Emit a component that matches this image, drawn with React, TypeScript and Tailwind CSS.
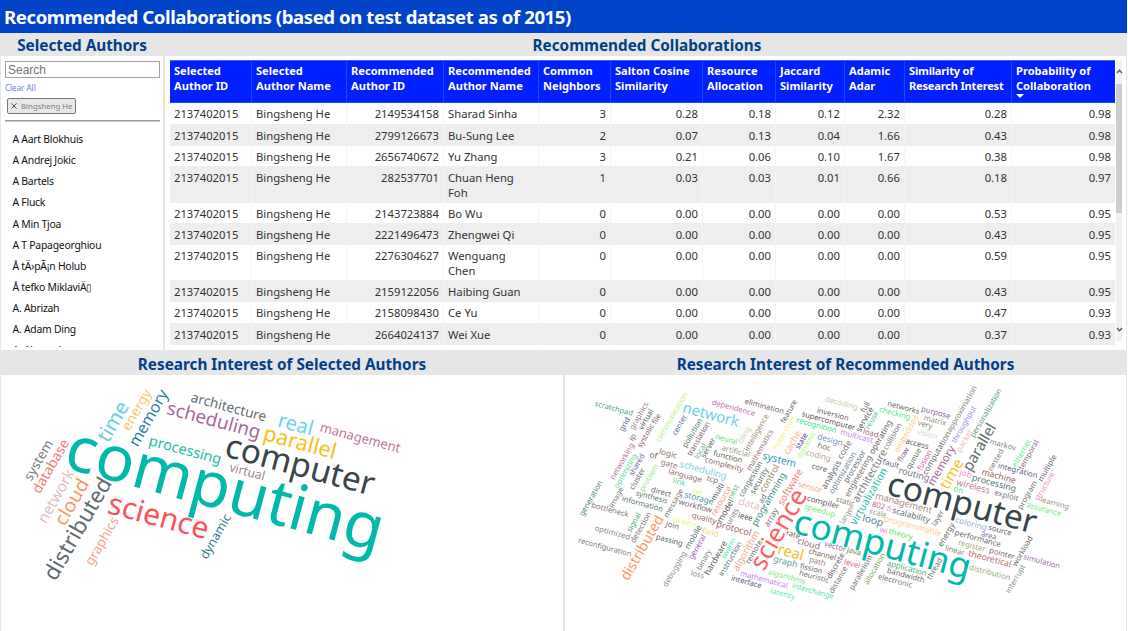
import React from "react";

type Align = "left" | "right";
type Column = { label: [string, string]; align: Align; sorted?: boolean; tight?: boolean };

const columns: Column[] = [
  { label: ["Selected", "Author ID"], align: "left" },
  { label: ["Selected", "Author Name"], align: "left" },
  { label: ["Recommended", "Author ID"], align: "right" },
  { label: ["Recommended", "Author Name"], align: "left" },
  { label: ["Common", "Neighbors"], align: "right" },
  { label: ["Salton Cosine", "Similarity"], align: "right" },
  { label: ["Resource", "Allocation"], align: "right" },
  { label: ["Jaccard", "Similarity"], align: "right" },
  { label: ["Adamic", "Adar"], align: "right" },
  { label: ["Similarity of", "Research Interest"], align: "right", tight: true },
  { label: ["Probability of", "Collaboration"], align: "right", sorted: true },
];

const GRID =
  "grid grid-cols-[82px_95px_97px_95px_72px_92px_73px_69px_60px_107px_103px]";

const rows: { h: string; pad: string; cells: string[] }[] = [
  { h: "h-[21px]", pad: "pt-[3px]", cells: ["2149534158", "Sharad Sinha", "3", "0.28", "0.18", "0.12", "2.32", "0.28", "0.98"] },
  { h: "h-[22px]", pad: "pt-[4px]", cells: ["2799126673", "Bu-Sung Lee", "2", "0.07", "0.13", "0.04", "1.66", "0.43", "0.98"] },
  { h: "h-[20px]", pad: "pt-[3px]", cells: ["2656740672", "Yu Zhang", "3", "0.21", "0.06", "0.10", "1.67", "0.38", "0.98"] },
  { h: "h-[37px]", pad: "pt-[4px]", cells: ["282537701", "Chuan Heng\nFoh", "1", "0.03", "0.03", "0.01", "0.66", "0.18", "0.97"] },
  { h: "h-[20px]", pad: "pt-[3px]", cells: ["2143723884", "Bo Wu", "0", "0.00", "0.00", "0.00", "0.00", "0.53", "0.95"] },
  { h: "h-[22px]", pad: "pt-[4px]", cells: ["2221496473", "Zhengwei Qi", "0", "0.00", "0.00", "0.00", "0.00", "0.43", "0.95"] },
  { h: "h-[35px]", pad: "pt-[3px]", cells: ["2276304627", "Wenguang\nChen", "0", "0.00", "0.00", "0.00", "0.00", "0.59", "0.95"] },
  { h: "h-[22px]", pad: "pt-[4px]", cells: ["2159122056", "Haibing Guan", "0", "0.00", "0.00", "0.00", "0.00", "0.43", "0.95"] },
  { h: "h-[21px]", pad: "pt-[3px]", cells: ["2158098430", "Ce Yu", "0", "0.00", "0.00", "0.00", "0.00", "0.47", "0.93"] },
  { h: "h-[22px]", pad: "pt-[4px]", cells: ["2664024137", "Wei Xue", "0", "0.00", "0.00", "0.00", "0.00", "0.37", "0.93"] },
];

const authors = [
  "A Aart Blokhuis",
  "A Andrej Jokic",
  "A Bartels",
  "A Fluck",
  "A Min Tjoa",
  "A T Papageorghiou",
  "Å tÄ›pÃ¡n Holub",
  "Å tefko MiklaviÄ▯",
  "A. Abrizah",
  "A. Adam Ding",
  "A. Alexandre",
];

/* Word: text, centre x, centre y, size, colour, direction (D = 15° down, U = 60° up) */
type Word = [string, number, number, number, string, "D" | "U"];

const selectedWords: Word[] = [
  ["computing", 224, 493.5, 66.4, "#01b8aa", "D"],
  ["computer", 299.5, 467.5, 35, "#374649", "D"],
  ["science", 158, 518.5, 31.5, "#fd5156", "D"],
  ["parallel", 299.5, 444, 22.8, "#f5c020", "D"],
  ["real", 295.3, 425.8, 21.5, "#6fd2ea", "D"],
  ["scheduling", 213.5, 421.5, 19.7, "#a66999", "D"],
  ["architecture", 228.5, 408, 14.5, "#666f72", "D"],
  ["management", 360, 438.7, 13.8, "#b9799e", "D"],
  ["processing", 185, 451, 15.3, "#28b8aa", "D"],
  ["virtual", 247, 472.6, 13, "#a1887f", "D"],
  ["time", 114.3, 422.3, 21.5, "#66cfe8", "U"],
  ["energy", 137.5, 410.3, 14.5, "#f5c869", "U"],
  ["memory", 149.5, 418.5, 16.7, "#2a8298", "U"],
  ["system", 39.3, 460.7, 14.2, "#777f80", "U"],
  ["database", 51.5, 466.8, 14.6, "#f27778", "U"],
  ["network", 57, 496.7, 16, "#dfbfbf", "U"],
  ["cloud", 73, 502.7, 20, "#fe9666", "U"],
  ["distributed", 79, 529.5, 23.3, "#5f6b6d", "U"],
  ["graphics", 102.7, 541.7, 14, "#f4a58d", "U"],
  ["dynamic", 216.3, 537, 13, "#337b8c", "U"],
];

const recommendedWords: Word[] = [
  ["computing", 882, 547, 37, "#01b8aa", "D"],
  ["computer", 961.5, 505.5, 35, "#374649", "D"],
  ["science", 780, 530.3, 27, "#fd625e", "U"],
  ["network", 710.7, 415.7, 15.7, "#6fcfe6", "D"],
  ["parallel", 980.3, 447.7, 15.8, "#5f6b6d", "U"],
  ["time", 952.5, 474.5, 16, "#f5c32c", "U"],
  ["real", 790.5, 553.3, 15.8, "#f2bd2c", "D"],
  ["distributed", 643, 548.3, 14.8, "#fe9666", "U"],
  ["memory", 942, 466, 11.7, "#a66999", "U"],
  ["architecture", 870.3, 476, 11, "#737b7b", "U"],
  ["virtualization", 869.3, 496.7, 11, "#2bb9ac", "U"],
  ["system", 779.3, 460.5, 11, "#3599b8", "D"],
  ["data", 749, 504.5, 10.9, "#dfbfbf", "D"],
  ["scheduling", 703, 470.5, 9.9, "#7fcfe0", "D"],
  ["cache", 792.7, 442.7, 10, "#f5b98d", "U"],
  ["software", 790.7, 487.3, 10.4, "#f08376", "U"],
  ["algorithm", 746.7, 551, 10.2, "#f6a58c", "U"],
  ["loop", 872.7, 521, 10.4, "#57858f", "D"],
  ["management", 903.5, 503.7, 9.7, "#a98a88", "D"],
  ["wireless", 973, 487, 9.7, "#bd8495", "D"],
  ["control", 770, 478.7, 9.5, "#a68754", "U"],
  ["programming", 769.3, 499.7, 9.6, "#438b83", "U"],
  ["protocol", 733.7, 529, 9.4, "#a0675f", "D"],
  ["routing", 914, 474.7, 9.6, "#74708a", "D"],
  ["processing", 994, 483.7, 9.3, "#527975", "D"],
  ["machine", 998.7, 476.7, 9.2, "#9a6459", "D"],
  ["theoretical", 989.7, 559.3, 9.2, "#b96f68", "D"],
  ["graph", 785.5, 562.3, 9.2, "#609b9a", "D"],
  ["cloud", 808.7, 544.3, 9.3, "#8b7178", "D"],
  ["hardware", 716.3, 558.3, 9, "#666363", "U"],
  ["model", 726, 511.3, 9, "#56595a", "U"],
  ["array", 771.7, 517.7, 9, "#827a69", "U"],
  ["analysis", 831.7, 475, 9, "#62635f", "U"],
  ["code", 845, 450, 9, "#7e7774", "U"],
  ["service", 865.3, 419.7, 8.9, "#625d60", "U"],
  ["scratchpad", 613.7, 409, 8, "#4fa596", "D"],
  ["grid", 625, 424.5, 8, "#6461a4", "U"],
  ["graphics", 639.5, 416, 8, "#a0827c", "U"],
  ["virtual", 646.5, 419.5, 8, "#595f66", "U"],
  ["ip", 633, 437.5, 8, "#707070", "U"],
  ["systolic", 646, 436, 8, "#846a69", "U"],
  ["file", 657, 419, 8, "#946f61", "U"],
  ["communication", 672, 417.5, 8, "#b5f27f", "U"],
  ["center", 680, 425, 8, "#6870b1", "U"],
  ["networking", 622.5, 461.5, 8, "#b075a2", "U"],
  ["optimizing", 626, 471, 8, "#57d99a", "U"],
  ["shared", 637.3, 465, 8, "#7561a3", "U"],
  ["cluster", 637.7, 479, 8, "#6c706b", "U"],
  ["problem", 649.3, 478, 8, "#a0e583", "U"],
  ["of", 653.3, 456, 8.5, "#65625d", "D"],
  ["logic", 668, 454, 8.5, "#8a756b", "D"],
  ["gate", 669, 464.7, 8.5, "#a3797a", "D"],
  ["language", 685, 476, 8.3, "#8c7175", "D"],
  ["link", 679, 482.5, 8, "#44dfa2", "D"],
  ["generation", 591.3, 498.5, 8, "#508974", "U"],
  ["image", 616.7, 497.5, 8, "#7c8282", "U"],
  ["direct", 661, 492.5, 8, "#6d6661", "D"],
  ["synthesis", 651.7, 497.5, 8, "#5d7464", "D"],
  ["information", 642.3, 504.3, 8, "#57776c", "D"],
  ["bottleneck", 610, 510.3, 8, "#887575", "D"],
  ["signal", 634.3, 522.7, 8, "#52a978", "U"],
  ["detection", 641.3, 527.7, 8, "#75776b", "U"],
  ["message", 674, 503.3, 8, "#7e7b6d", "U"],
  ["workflow", 695.3, 506.5, 8.3, "#6e6970", "D"],
  ["storage", 699, 498.7, 8.8, "#4b8fa6", "D"],
  ["set", 697.3, 492.7, 8, "#dff77f", "D"],
  ["stream", 684.3, 522.3, 8.2, "#f5f17b", "D"],
  ["join", 672.3, 525.7, 8, "#6d6a65", "D"],
  ["passing", 669.3, 540.7, 8, "#56605d", "D"],
  ["optimized", 612.3, 533, 8, "#93808a", "D"],
  ["reconfiguration", 604.7, 547.7, 7.9, "#83786f", "D"],
  ["mobile", 693.7, 537.3, 8.5, "#5e717e", "U"],
  ["general", 697.7, 547.3, 8, "#9b65b6", "U"],
  ["field", 710.3, 533, 8.5, "#fad084", "D"],
  ["debugging", 675, 569.3, 8, "#8c908b", "U"],
  ["loss", 697.3, 575, 8, "#87978a", "D"],
  ["binary", 704.3, 560, 8, "#84817c", "U"],
  ["dependence", 733.3, 408.3, 8, "#c070b5", "D"],
  ["elimination", 764.3, 406.7, 8, "#735d65", "D"],
  ["feature", 789.3, 411.7, 8, "#6d695d", "U"],
  ["pollution", 692.7, 433.3, 8, "#54826c", "U"],
  ["translation", 699, 439, 8, "#7b696c", "U"],
  ["local", 700.7, 451.3, 8, "#79b083", "U"],
  ["server", 708.7, 448, 8, "#5a6870", "U"],
  ["neural", 726.3, 439.7, 8, "#62e561", "D"],
  ["tiling", 744.7, 435.3, 8, "#d7d0b3", "U"],
  ["intelligence", 757, 432.7, 8, "#a78c70", "U"],
  ["artificial", 735.7, 451.7, 8.2, "#a89884", "D"],
  ["function", 727.7, 457.3, 8, "#61645e", "D"],
  ["complexity", 724, 465, 8, "#8b6b6c", "D"],
  ["mathematics", 760.3, 450.3, 8, "#a17577", "U"],
  ["hypervisor", 784.7, 432.7, 8, "#fbf186", "U"],
  ["state", 802, 441.3, 8, "#563e94", "U"],
  ["dynamic", 807, 445, 8, "#aaf77e", "U"],
  ["tcp", 712.3, 480, 8.2, "#83736a", "D"],
  ["congestion", 751, 479.3, 8, "#5b7269", "U"],
  ["security", 759.7, 481, 8.3, "#5c6861", "U"],
  ["ad", 763, 499, 8, "#627980", "U"],
  ["multi", 718, 492, 8, "#565656", "U"],
  ["resource", 721.7, 501.3, 8.5, "#f29a7f", "U"],
  ["nest", 733.7, 492, 8, "#52bb83", "U"],
  ["units", 733, 516.7, 8, "#848275", "U"],
  ["ieee", 745.3, 517.3, 8, "#4b5157", "D"],
  ["quality", 704, 518.7, 8.3, "#a66a6a", "D"],
  ["swarm", 728.7, 548.7, 8, "#4fecab", "U"],
  ["instruction", 730.7, 559, 8, "#57788b", "U"],
  ["remote", 754.3, 552, 8, "#6d7770", "U"],
  ["sensor", 810, 487.7, 8.5, "#f5a67f", "D"],
  ["speedup", 819.7, 511, 8.2, "#78e865", "D"],
  ["compiler", 823, 502.7, 8.4, "#595a58", "D"],
  ["rate", 793, 535, 8, "#775966", "D"],
  ["path", 817.3, 562, 8.2, "#987d6f", "D"],
  ["channel", 822.3, 555, 8, "#7c6560", "D"],
  ["fission", 811, 569, 8, "#6d656d", "D"],
  ["heuristic", 814, 577, 8, "#737773", "D"],
  ["algorithms", 786.7, 577.3, 8, "#80e785", "D"],
  ["mathematical", 764, 580, 8, "#d17be7", "D"],
  ["interface", 746.3, 582.3, 8, "#545a5b", "D"],
  ["latency", 782.7, 594.3, 8, "#54edac", "D"],
  ["interchange", 813, 591.5, 8, "#51e4ae", "D"],
  ["decoding", 841.3, 403.7, 8, "#b6d0b0", "D"],
  ["full", 865.7, 407.3, 8, "#696a61", "U"],
  ["inversion", 832.7, 414.7, 8, "#6c6059", "D"],
  ["supercomputer", 828.3, 421.3, 8, "#57534f", "D"],
  ["recognition", 816.3, 425.7, 8, "#34dd90", "D"],
  ["reuse", 872.3, 420.3, 8, "#62cb85", "U"],
  ["networks", 903.3, 408, 8, "#666f6a", "D"],
  ["checking", 894.7, 413.7, 8, "#54e67d", "D"],
  ["purpose", 935.7, 413, 8, "#896197", "D"],
  ["matrix", 935, 421, 8, "#989082", "D"],
  ["very", 925, 425, 8, "#8b8070", "D"],
  ["vision", 927.3, 434.7, 8, "#c9dec2", "D"],
  ["embedded", 907, 434, 8.4, "#f9cf88", "U"],
  ["collision", 892.7, 436.7, 8, "#7f7875", "U"],
  ["operating", 881, 437.3, 8.6, "#6a6661", "U"],
  ["load", 870.7, 433.7, 8, "#a05b79", "D"],
  ["multicast", 856.7, 436.7, 8.2, "#b887df", "D"],
  ["design", 830, 440.3, 8.7, "#728fca", "D"],
  ["hoc", 824, 447.3, 8, "#726d68", "D"],
  ["coding", 818.3, 456, 8.2, "#b49c87", "D"],
  ["core", 819.3, 468.3, 8, "#56686c", "D"],
  ["optimization", 843, 473, 8.2, "#6c8196", "U"],
  ["processor", 855, 466.7, 8.3, "#636e75", "U"],
  ["engineering", 858.7, 476.3, 8.6, "#7c6e67", "U"],
  ["flow", 903.7, 455, 8, "#84678a", "U"],
  ["access", 917, 444.3, 8.3, "#655c55", "D"],
  ["queue", 914, 459, 8.2, "#66816f", "U"],
  ["fusion", 925, 460.3, 8, "#cb60ab", "U"],
  ["fault", 890.7, 464.3, 8.3, "#76657e", "D"],
  ["computation", 937, 453.3, 8.4, "#67716b", "U"],
  ["802", 878.3, 506, 8, "#b9618a", "D"],
  ["fi", 889, 509.3, 8, "#ed85d3", "D"],
  ["scalability", 911, 515.7, 8.8, "#5f6e70", "D"],
  ["scale", 877.7, 513.7, 8, "#9d9c86", "D"],
  ["static", 845.3, 502, 8, "#93816e", "D"],
  ["larger", 847.3, 514.7, 8, "#9c9b87", "U"],
  ["programmable", 912.7, 526.7, 8.8, "#f9ce91", "D"],
  ["layer", 938.3, 518.3, 8, "#6e7f71", "U"],
  ["wi", 883.7, 530.7, 8, "#dd8de5", "D"],
  ["theory", 900.7, 534.7, 8.4, "#60e65c", "D"],
  ["vector", 835, 547, 8, "#8d6e8b", "D"],
  ["java", 854, 551.7, 8, "#807a67", "D"],
  ["discrete", 836, 566, 8, "#705e75", "U"],
  ["distance", 838.7, 580, 8, "#80796b", "U"],
  ["level", 852, 564.3, 8, "#cf6687", "D"],
  ["parallelism", 861.3, 572.7, 8, "#73776b", "U"],
  ["allocation", 875, 569, 8, "#79a763", "U"],
  ["application", 906.7, 568.7, 8.2, "#48ae7e", "D"],
  ["bandwidth", 905.7, 575.7, 8, "#785f69", "D"],
  ["electronic", 895, 581.3, 8, "#827974", "D"],
  ["thread", 935, 569, 8, "#69756e", "U"],
  ["approximation", 962.3, 409.3, 8, "#8a8279", "U"],
  ["throughput", 964.3, 424.7, 8, "#a28be0", "U"],
  ["packet", 964.7, 441, 8.2, "#dfc0b5", "U"],
  ["personalization", 986.3, 413.3, 8, "#609b80", "U"],
  ["markov", 1002.7, 445.3, 8, "#7a8881", "D"],
  ["nested", 996.3, 460.3, 8, "#8a8575", "U"],
  ["ethernet", 1022, 453.3, 8, "#5bef91", "U"],
  ["temporal", 1029, 455, 8, "#8b6f86", "U"],
  ["integration", 1017.7, 471, 8.2, "#68607f", "D"],
  ["job", 965.7, 474.3, 8.6, "#ef8fc2", "D"],
  ["on", 958.3, 490.3, 8.5, "#52e878", "D"],
  ["exploit", 1006.3, 496, 8, "#7c7194", "D"],
  ["multiple", 1047.7, 468.3, 8, "#746080", "U"],
  ["program", 1027.7, 495.3, 8, "#6d7b69", "U"],
  ["structure", 1045, 486.7, 8, "#f48bb9", "U"],
  ["learning", 1054.7, 503.7, 8, "#9b9382", "D"],
  ["assurance", 1043.7, 509.7, 8, "#6de879", "D"],
  ["coloring", 971, 524.3, 8.7, "#90afe0", "D"],
  ["source", 1000, 530.7, 8, "#5e6464", "D"],
  ["area", 988.7, 536, 8, "#80699c", "D"],
  ["energy", 946.7, 535, 8.4, "#576764", "U"],
  ["performance", 977.7, 539, 8.2, "#5f6466", "D"],
  ["register", 971.7, 546.3, 8.2, "#a5a56e", "D"],
  ["pointer", 1002, 554, 8, "#7f6775", "D"],
  ["linear", 954.7, 551, 8, "#7e8588", "D"],
  ["workload", 1023, 551.3, 8, "#6c6a67", "U"],
  ["simulation", 1041.7, 562, 8, "#a167ad", "D"],
  ["distribution", 989.7, 573, 8.2, "#95a978", "D"],
  ["interrupt", 1016, 579, 8, "#94908c", "U"],
];

/* Advance widths in em, used to give each word its length along the baseline. */
const ADVANCE: Record<string, number> = {
  a: 0.509, b: 0.588, c: 0.462, d: 0.589, e: 0.523, f: 0.313, g: 0.589, h: 0.565, i: 0.242,
  j: 0.242, k: 0.497, l: 0.242, m: 0.861, n: 0.565, o: 0.586, p: 0.588, q: 0.589, r: 0.348,
  s: 0.424, t: 0.339, u: 0.565, v: 0.479, w: 0.723, x: 0.459, y: 0.484, z: 0.452,
};

const wordLength = (text: string, size: number) =>
  size * 1.025 * [...text].reduce((sum, ch) => sum + (ADVANCE[ch] ?? 0.539), 0);

function WordCloud({ words, left, width }: { words: Word[]; left: number; width: number }) {
  return (
    <svg
      className="block h-[256px] w-full font-['Noto_Sans','Open_Sans',sans-serif]"
      viewBox={`${left} 375 ${width} 256`}
      role="img"
    >
      {words.map(([text, x, y, size, color, dir]) => (
        <text
          key={text}
          transform={`translate(${x} ${y}) rotate(${dir === "D" ? 15 : -60})`}
          y={size * 0.25}
          fontSize={size * 0.95}
          textAnchor="middle"
          textLength={wordLength(text, size)}
          lengthAdjust="spacingAndGlyphs"
          fill={color}
        >
          {text}
        </text>
      ))}
    </svg>
  );
}

function PanelTitle({ children, className = "" }: { children: React.ReactNode; className?: string }) {
  return (
    <h2
      className={`flex items-center justify-center bg-[#e6e6e6] text-[15.3px] font-bold whitespace-nowrap text-[#00408a] ${className}`}
    >
      {children}
    </h2>
  );
}

function AuthorSlicer() {
  return (
    <section className="flex w-[165px] flex-col border-r-2 border-l border-[#e6e6e6] bg-white">
      <PanelTitle className="h-[23px] pt-px">Selected Authors</PanelTitle>
      <div className="flex h-[294px] flex-col overflow-hidden pt-[5px] pr-[3px] pl-1">
        <input
          className="h-[17px] w-[155px] shrink-0 border border-[#a0a0a0] bg-white px-[2px] font-['Liberation_Sans',sans-serif] text-[12px] leading-[15px] placeholder:text-[#757575]"
          placeholder="Search"
        />
        <button className="mt-[3px] h-[13px] shrink-0 text-left text-[8px] leading-[13px] text-[#6d7bf5]">
          Clear All
        </button>
        <div className="mt-1 ml-[2px] flex h-[16px] w-[69px] shrink-0 items-center rounded-[2px] border border-[#777] bg-[#e8e8e8] pl-[3px] text-[7.8px] text-[#808080]">
          <svg className="mr-1 size-[6px] shrink-0" viewBox="0 0 6 6" stroke="#555" strokeWidth="1">
            <path d="M.4.4 5.6 5.6M5.6.4.4 5.6" />
          </svg>
          <span className="pt-px whitespace-nowrap">Bingsheng He</span>
        </div>
        <div className="mt-[6px] h-[2px] w-[155px] shrink-0 border-t border-b border-t-[#999] border-b-[#ccc]" />
        <ul className="mt-[7px] h-[218px] overflow-hidden pl-[7.5px] text-[10.4px] tracking-[-0.25px] text-[#111]">
          {authors.map((a) => (
            <li key={a} className="h-[21.15px] leading-[21.15px] whitespace-nowrap">
              {a}
            </li>
          ))}
        </ul>
      </div>
    </section>
  );
}

function CollaborationTable() {
  return (
    <section className="flex flex-1 flex-col border-r border-[#e6e6e6] bg-white">
      <PanelTitle className="h-[23px] pt-px">
        <span className="pl-[3px]">Recommended Collaborations</span>
      </PanelTitle>
      <div className="flex h-[294px] pt-1 pl-[5px]">
        <div className="h-[285px] w-[945px] overflow-hidden">
          <div className={`${GRID} h-[43px] border-t border-b border-t-[#4060f0] border-b-[#0a58e0] bg-[#0020ff]`}>
            {columns.map((c, i) => (
              <div
                key={i}
                className={`border-r border-[#1848f8] pt-[2px] pl-[4px] text-[11.1px] leading-[15px] font-bold whitespace-nowrap text-white last:border-r-0 ${
                  c.tight ? "tracking-[-0.2px]" : ""
                }`}
              >
                {c.label[0]}
                <br />
                {c.label[1]}
                {c.sorted && (
                  <svg className="mt-px block h-[4px] w-[8px]" viewBox="0 0 8 4" fill="#fff">
                    <path d="M0 0H8L4 4Z" />
                  </svg>
                )}
              </div>
            ))}
          </div>
          {rows.map((r, i) => (
            <div key={i} className={`${GRID} ${r.h} ${i % 2 ? "bg-[#eeeeee]" : "bg-white"}`}>
              {["2137402015", "Bingsheng He", ...r.cells].map((v, j) => (
                <div
                  key={j}
                  className={`border-r border-[#f4f4f4] pl-[4px] text-[11.25px] leading-[15px] whitespace-pre text-[#333] last:border-r-0 ${r.pad} ${
                    columns[j].align === "right" ? "pr-[4px] text-right" : ""
                  }`}
                >
                  {v}
                </div>
              ))}
            </div>
          ))}
        </div>
        <div className="ml-px flex h-[281px] w-[6px] flex-col justify-between bg-[#f1f1f1]">
          <svg className="mt-[9px] h-[5px] w-[7px]" viewBox="0 0 7 5" fill="none" stroke="#555" strokeWidth="1.3">
            <path d="M1 4 3.5 1.2 6 4" />
          </svg>
          <div className="mt-[10px] mb-auto h-[129px] w-[6px] bg-[#cdcdcd]" />
          <svg className="mb-[9px] h-[5px] w-[7px]" viewBox="0 0 7 5" fill="none" stroke="#555" strokeWidth="1.3">
            <path d="M1 1 3.5 3.8 6 1" />
          </svg>
        </div>
      </div>
    </section>
  );
}

export default function App() {
  return (
    <main className="flex h-[631px] w-[1128px] flex-col overflow-hidden bg-white font-['Noto_Sans','Open_Sans',sans-serif]">
      <header className="flex h-[33px] w-[1127px] shrink-0 items-center bg-[#0043c8] pl-[4px]">
        <h1 className="text-[18.6px] font-bold tracking-[-0.42px] whitespace-nowrap text-white">
          Recommended Collaborations (based on test dataset as of 2015)
        </h1>
      </header>
      <div className="flex h-[317px] w-[1127px] shrink-0">
        <AuthorSlicer />
        <CollaborationTable />
      </div>
      <div className="flex w-[1127px] flex-1 border-r border-[#e6e6e6]">
        <section className="w-[565px] border-r-2 border-l border-[#e6e6e6]">
          <PanelTitle className="h-[25px] pt-[3px]">Research Interest of Selected Authors</PanelTitle>
          <WordCloud words={selectedWords} left={1} width={562} />
        </section>
        <section className="flex-1">
          <PanelTitle className="h-[25px] pt-[3px]">Research Interest of Recommended Authors</PanelTitle>
          <WordCloud words={recommendedWords} left={565} width={561} />
        </section>
      </div>
    </main>
  );
}
